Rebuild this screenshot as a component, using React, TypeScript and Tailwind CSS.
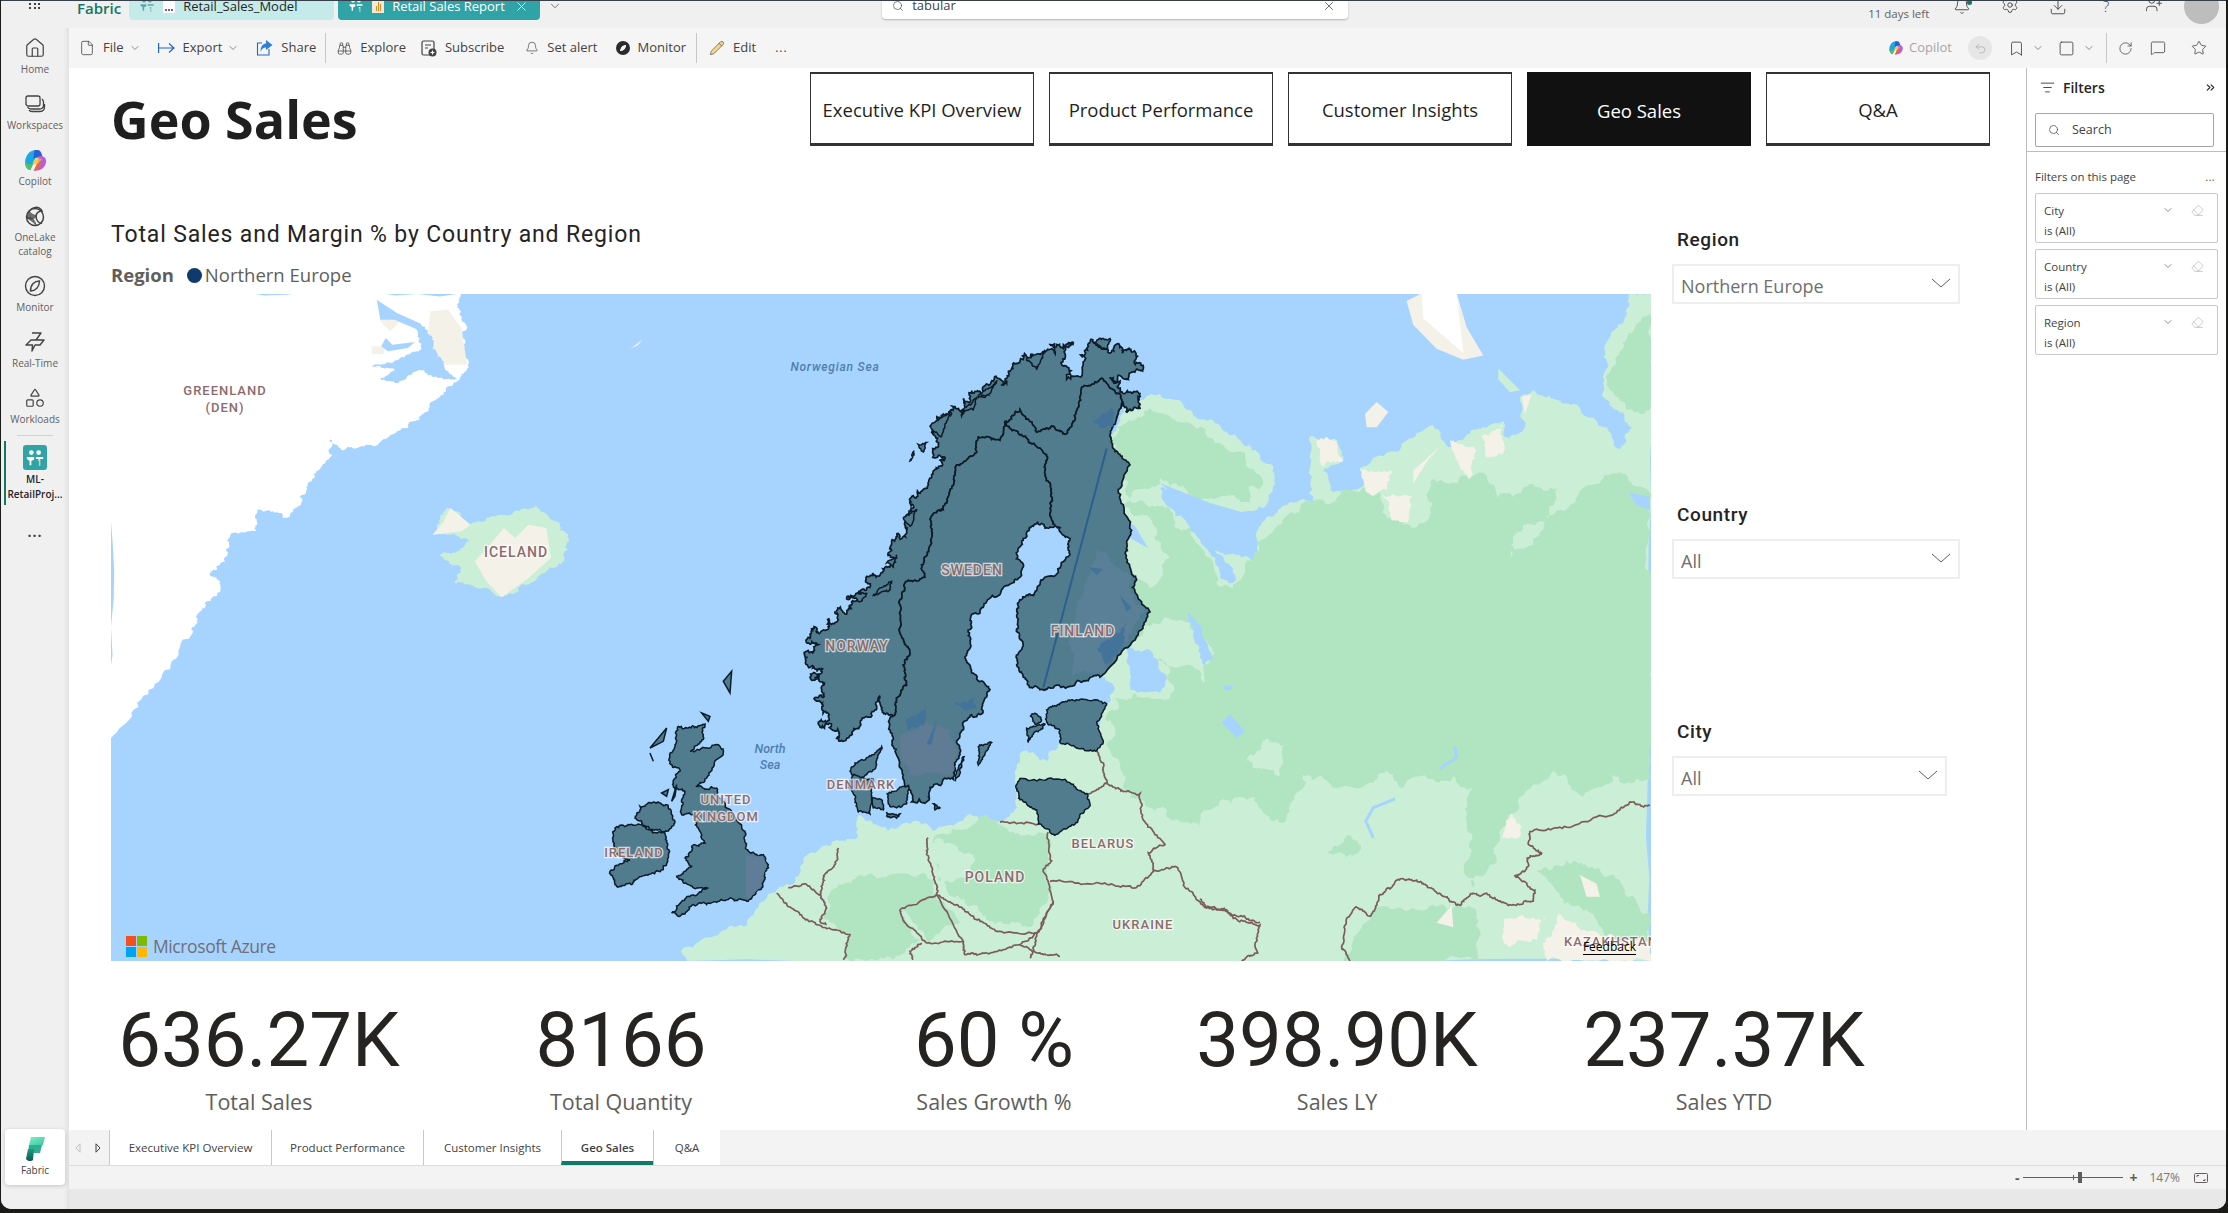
import {
  Bell, Binoculars, Bookmark, ChevronDown, ChevronsRight, Download, Eraser, File, House,
  ListFilter, MessageSquare, Pencil, RotateCw, Search, Settings, Shapes, Square, Star, Undo2, UserPlus, X,
} from "lucide-react";

const NS = "#507c8e";
const EDGE = "#0d1c28";
const LIGHT = "#cbeed6";
const FOREST = "#b1e5c1";
const SAND = "#f4f2e8";
const BORDER = "#7c5b5b";
const WATER = "#a7d4fe";

// roughens a polygon so coasts and forest edges don't look like straight cuts
function hash(x: number, y: number) {
  const s = Math.sin(x * 12.9898 + y * 78.233) * 43758.5453;
  return s - Math.floor(s);
}

function jag(points: string, amp: number, closed = true, depth = 4, rough = 0.3) {
  const pts = points.trim().split(" ").map((s) => s.split(",").map(Number));
  const split = (a: number[], b: number[], d: number): number[][] => {
    const len = Math.hypot(b[0] - a[0], b[1] - a[1]);
    if (d === 0 || len < 5) return [];
    const [p, q] = a[0] < b[0] || (a[0] === b[0] && a[1] < b[1]) ? [a, b] : [b, a];
    const mx = (a[0] + b[0]) / 2;
    const my = (a[1] + b[1]) / 2;
    const off = (hash(mx, my) - 0.5) * 2 * Math.min(amp, len * rough);
    const m = [mx - ((q[1] - p[1]) / len) * off, my + ((q[0] - p[0]) / len) * off];
    return [...split(a, m, d - 1), m, ...split(m, b, d - 1)];
  };
  const out: number[][] = [];
  pts.forEach((p, i) => {
    out.push(p);
    const next = pts[i + 1] ?? (closed ? pts[0] : null);
    if (next) out.push(...split(p, next, depth));
  });
  return out.map((p) => `${p[0].toFixed(1)},${p[1].toFixed(1)}`).join(" ");
}

const greenland = "25,316 25,1650 120,1500 205,1340 235,1260 270,1200 250,1150 280,1120 290,1050 350,1030 350,965 410,990 450,950 480,870 520,800 510,740 540,785 600,770 690,720 720,680 770,620 805,575 825,530 820,410 800,350 810,316";
const fjordA = "715,405 735,430 745,480 770,530 800,570 770,575 715,545 660,585 625,570 665,545 605,535 650,525 715,490 712,440";
const fjordB = "620,335 665,375 715,405 712,425 660,395 628,395";
const fjordC = "640,450 655,470 705,462 690,480 645,490 630,475";

const land = "687,963 683,950 700,943 747,927 767,900 790,887 807,857 837,842 857,840 860,817 888,833 918,823 933,833 973,818 1000,823 1017,810 1015,781 1023,753 1047,763 1060,744 1090,735 1107,706 1115,690 1100,679 1110,600 1110,450 1127,402 1160,396 1187,412 1227,434 1260,459 1270,466 1275,486 1257,512 1240,518 1200,510 1160,490 1165,505 1210,555 1220,580 1233,585 1233,570 1215,552 1257,565 1262,560 1257,533 1287,507 1313,503 1310,438 1337,442 1343,462 1323,473 1333,494 1360,490 1360,470 1413,440 1433,427 1448,449 1483,429 1503,423 1510,442 1525,429 1520,399 1533,392 1577,407 1603,429 1620,451 1632,429 1603,394 1605,347 1627,316 1630,295 1651,295 1651,963";
const forest = "1313,503 1360,494 1380,494 1387,520 1420,525 1433,481 1490,486 1513,499 1533,486 1557,490 1550,516 1513,542 1510,560 1533,547 1560,512 1583,490 1613,475 1651,499 1651,781 1613,777 1583,799 1553,773 1520,799 1500,838 1487,873 1473,890 1467,825 1473,790 1433,781 1403,790 1387,773 1367,786 1333,790 1303,777 1283,825 1240,799 1220,803 1200,829 1165,810 1130,800 1115,760 1105,720 1115,700 1135,695 1170,700 1170,670 1130,640 1120,600 1125,560 1125,505 1165,510 1210,560 1233,590 1245,570 1257,545";

const norwayCoast = "230,1030 175,990 205,975 165,930 190,900 150,880 190,860 148,820 175,800 150,775 195,765 230,745 225,720 265,715 300,680 260,685 320,665 345,630 395,605 385,575 430,535 445,480 465,440 490,420 520,375 555,345 515,280 570,230 605,240 650,180 700,155 740,160 800,95 860,80 940,60 920,150 985,70 1005,60 1045,80 1085,85 1150,125 1095,150 1050,145 1090,185 1140,185 1140,200 1090,210 1070,245";
const norwayBorder = "1070,245 1085,200 1030,150 965,170 945,250 915,285 875,265 830,280 780,225 735,255 720,300 655,290 650,330 590,360 580,410 550,470 515,485 515,550 485,605 495,635 435,650 420,690 425,780 450,820 430,850 440,900 410,935 400,975";
const norwaySouth = "400,975 365,960 360,925 345,960 300,1000 260,1030 230,1030";
const norway = `${jag(norwayCoast, 24, false, 5, 0.5)} ${jag(norwayBorder, 4, false)} ${jag(norwaySouth, 8, false)}`;
const sweden = `${jag("735,255 790,290 860,335 855,375 875,430 870,480 885,510", 4, false)} ${jag("885,510 850,505 820,510 790,540 770,590 790,610 755,650 680,695 630,740 630,790 615,830 640,870 690,910 665,970 610,990 590,1040 600,1070 580,1130 510,1150 500,1185 455,1185 430,1120 400,1050 390,980 400,975", 9, false)} ${jag("400,975 410,935 440,900 430,850 450,820 425,780 420,690 435,650 495,635 485,605 515,550 515,485 550,470 580,410 590,360 650,330 655,290 720,300 735,255", 4, false)}`;
const finland = `${jag("780,225 830,280 875,265 915,285 945,250 965,170 1030,150 1085,200 1070,245", 4, false)} ${jag("1070,245 1050,290 1060,320 1110,360 1075,420 1115,520 1100,550 1100,590 1130,640 1115,660 1170,720 1130,780 1020,880", 4, false)} ${jag("1020,880 960,890 860,910 820,905 790,880 770,850 785,790 770,730 780,690 820,680 850,640 930,580 930,540 885,510", 8, false)} ${jag("885,510 870,480 875,430 855,375 860,335 790,290 735,255 780,225", 4, false)}`;

const shaded = [
  "860,960 910,940 950,935 1040,945 1010,990 1030,1040 1010,1060 980,1060 900,1040 900,1010 860,990",
  "768,1145 780,1128 915,1130 980,1165 990,1190 945,1240 880,1265 835,1240 830,1205 780,1180",
  "285,1090 340,1070 365,1050 345,1105 300,1130 270,1110",
  "265,1150 280,1120 340,1130 335,1170 330,1215 295,1210 285,1170",
  "335,1175 365,1180 370,1205 340,1200",
  "380,1165 445,1145 440,1190 410,1200 385,1190",
  "380,1210 420,1215 410,1225 380,1220",
  "810,975 830,970 845,985 825,995",
  "800,1005 855,995 820,1020 805,1040",
  "655,1050 695,1040 670,1075 655,1095",
  "612,1075 600,1110 585,1135 590,1110",
  "520,1190 540,1200 525,1205",
  "450,350 462,325 455,345",
  "475,310 500,305 490,328",
  "510,265 575,225 545,290",
  "605,230 650,195 640,225",
  "655,195 710,155 690,185",
  "800,100 850,85 830,125",
  "870,65 885,62 880,72",
  "1000,60 1050,50 1040,75",
  "340,680 395,645 385,670",
  "275,680 320,675 300,695",
  "430,490 470,470 450,510",
  "380,600 410,580 400,610",
];

const britain = "355,205 385,210 435,198 430,230 390,280 480,265 490,285 440,360 410,385 470,390 500,450 555,520 565,580 610,590 625,620 605,690 565,730 500,725 440,740 400,740 355,775 335,765 385,715 445,690 385,680 350,655 395,625 375,600 395,565 435,555 415,510 395,470 365,470 375,400 340,385 360,340 330,310 350,250";
const ireland = "165,510 245,500 270,515 315,525 325,600 310,635 235,660 215,680 165,680 150,640 210,605 170,590 160,530";
const ulster = "225,480 240,445 275,435 320,440 345,490 320,520 270,515 245,490";
const ukIslands = [
  "270,270 320,210 310,250",
  "305,405 325,395 320,415",
  "425,165 450,175 445,190",
  "490,70 515,40 510,105",
  "270,285 280,310 272,290",
  "335,430 350,380 345,415",
];

const borders7 = [
  "1010,1060 1030,1100 1040,1140 980,1165",
  "1040,1140 1090,1160 1140,1165 1150,1230 1215,1290 1165,1310 1180,1355 1250,1345 1275,1395 1330,1440 1430,1465 1500,1480",
  "1180,1355 1130,1395 1020,1385 870,1380",
  "865,1260 875,1330 850,1350 880,1430 830,1510 810,1568",
  "720,1235 835,1240",
];
const borders8 = [
  "650,705 680,740 720,770 770,800 870,830 850,905",
  "685,690 740,680 780,710 800,750 780,790 800,800",
  "835,570 825,620 790,660 780,710",
  "1105,540 1100,590 1130,680 1130,710",
  "1020,755 1040,800 1100,855 1210,850 1130,710 1020,755",
  "1130,710 1190,740 1230,770 1280,800 1310,820 1430,825 1480,730",
  "1085,855 1050,880 1060,905",
  "1210,850 1215,890 1280,885 1380,860 1430,825",
  "1380,860 1440,885 1500,895",
];
const borders10 = [
  "0,1405 20,1425 80,1430 100,1450 180,1465 165,1510 175,1530 125,1548",
  "1350,1190 1290,1182 1245,1208 1100,1240 990,1250 985,1275 1025,1300 980,1310 985,1330 945,1352 1005,1385 1000,1410 925,1420 860,1392 810,1395 780,1420 735,1400 695,1380 650,1362 590,1362 540,1395 510,1445 465,1425 440,1450 425,1515 450,1548",
];

function MapLabel({ x, y, children, size = 14 }: { x: number; y: number; children: string; size?: number }) {
  return (
    <text
      x={x}
      y={y}
      textAnchor="middle"
      fontSize={size}
      letterSpacing="1"
      fill="#8d6b6b"
      stroke="#ffffff"
      strokeOpacity="0.7"
      strokeWidth="2.5"
      className="font-['Roboto'] font-medium [paint-order:stroke]"
    >
      {children}
    </text>
  );
}

function GeoMap() {
  return (
    <div className="relative h-[667px] w-[1540px] overflow-hidden bg-[#a7d4fe]">
      <svg viewBox="111 296 1540 667" className="block h-full w-full">
        <rect x="111" y="296" width="1540" height="667" fill={WATER} />

        <g transform="translate(100 190) scale(0.4464 0.3333)">
          <polygon points={jag(greenland, 9)} fill="#ffffff" />
          <polygon points="740,370 780,365 810,420 822,530 770,530 745,480 735,430" fill={SAND} />
          <polygon points="630,365 680,390 650,430 628,400" fill={SAND} />
          <polygon points="608,475 640,475 635,498 608,498" fill={SAND} />
          <polygon points={jag(fjordA, 5)} fill={WATER} />
          <polygon points={fjordB} fill={WATER} />
          <polygon points={fjordC} fill={WATER} />
          <polygon points="1188,482 1215,455 1205,472" fill={SAND} />
          <polygon points={jag("745,1040 780,960 830,1010 860,1000 900,980 975,950 1020,1000 1050,1050 1040,1110 980,1170 930,1215 900,1228 860,1200 830,1190 795,1185 810,1140 760,1105 800,1090 830,1060 800,1045", 6)} fill={LIGHT} />
          <polygon points="745,1040 770,1000 785,960 830,1010 810,1030" fill={SAND} />
          <polygon points="840,1120 880,1060 905,1020 930,1050 960,1010 1000,1020 1010,1110 960,1170 900,1228 865,1180" fill={SAND} />
        </g>

        <polygon points={jag(land, 3)} fill={LIGHT} />
        <polygon points={jag(forest, 8, true, 5)} fill={FOREST} />
        <polygon points={jag("1140,625 1190,625 1212,650 1205,685 1160,660 1132,650", 6)} fill={LIGHT} />
        <polygon points={jag("1120,510 1150,520 1170,560 1150,590 1125,570", 6)} fill={LIGHT} />
        <polygon points={jag("1112,440 1150,410 1190,425 1245,455 1262,480 1250,505 1205,500 1160,480 1130,500", 6)} fill={FOREST} />
        <polygon points={jag("1127,650 1150,652 1167,680 1160,695 1130,692", 2)} fill={WATER} />
        <polygon points={jag("1187,614 1197,625 1213,660 1205,667 1195,645", 2)} fill={WATER} />
        <polygon points="1122,520 1135,528 1148,550 1130,540" fill={WATER} />
        <polygon points="1160,485 1210,505 1245,515 1235,522 1195,515" fill={WATER} />

        <g transform="translate(1200 290) scale(0.3333 0.4348)">
          <polygon points="620,30 665,12 770,12 800,90 850,155 790,165 710,140 640,85" fill={SAND} />
          <polygon points="665,12 770,12 790,150 730,110 670,70" fill="#ffffff" />
          <polygon points="495,290 530,262 565,285 530,320 500,320" fill={SAND} />
          <polygon points="895,185 960,235 930,240 895,210" fill={LIGHT} />
          <polygon points={jag("340,345 400,350 430,395 370,410", 6)} fill={SAND} />
          <polygon points={jag("480,415 575,420 560,465 500,470", 6)} fill={SAND} />
          <polygon points="640,420 720,365 680,400 640,450" fill={SAND} />
          <polygon points={jag("750,350 830,375 810,440 780,410", 6)} fill={SAND} />
          <polygon points={jag("845,340 910,310 910,380 860,390", 6)} fill={SAND} />
          <polygon points="965,250 995,245 975,290" fill={SAND} />
          <polygon points={jag("550,475 640,480 625,535 580,535", 6)} fill={SAND} />
          <polygon points={jag("1240,180 1300,100 1350,60 1350,280 1280,280 1220,210", 8)} fill={FOREST} />
          <polygon points="1285,470 1350,480 1350,510 1310,500" fill={WATER} />
          <polygon points="70,915 100,915 90,925 75,925" fill={WATER} />
          <polygon points="65,1000 90,980 135,1020 110,1035" fill={WATER} />
          <polygon points={jag("135,1090 190,1040 250,1050 240,1120 170,1105", 8)} fill={LIGHT} />
          <polygon points={jag("145,460 190,455 200,500 165,500", 6)} fill={LIGHT} />
          <polygon points={jag("375,1300 440,1260 485,1290 440,1310", 6)} fill={FOREST} />
          <path d="M720 1105 L770 1080 L765 1055 M495 1230 L520 1195 L585 1175 M500 1230 L520 1265" fill="none" stroke={WATER} strokeWidth="3" vectorEffect="non-scaling-stroke" />
          <polygon points={jag("430,1548 520,1430 690,1420 830,1440 830,1548", 10)} fill={FOREST} />
          <polygon points={jag("1010,1340 1130,1320 1230,1350 1350,1440 1350,1548 1210,1480 1080,1400", 10)} fill={FOREST} />
          <polygon points={jag("910,1450 1040,1450 1010,1500 920,1510", 8)} fill={SAND} />
          <polygon points={jag("1030,1520 1080,1440 1200,1490 1350,1500 1350,1548 1040,1548", 8)} fill={SAND} />
          <polygon points={jag("905,1265 935,1210 965,1240 955,1265", 5)} fill={SAND} />
          <polygon points="710,1460 755,1420 760,1470" fill={SAND} />
          <polygon points="1140,1350 1190,1370 1200,1400 1160,1400" fill={SAND} />
          {borders10.map((p) => (
            <polyline key={p} points={jag(p, 3, false)} fill="none" stroke={BORDER} strokeWidth="1.7" vectorEffect="non-scaling-stroke" />
          ))}
        </g>

        <g transform="translate(560 660) scale(0.3333)">
          <polygon points={jag("830,690 920,650 1100,650 1130,720 1020,750 1080,850 1000,905 850,905 870,830 790,780", 12)} fill={FOREST} />
          <polygon points={jag("1120,540 1270,470 1340,510 1460,530 1470,680 1420,800 1290,790 1220,740 1160,700 1130,620", 12)} fill={FOREST} />
          <polygon points={jag("1020,755 1130,720 1200,790 1100,850", 8)} fill={FOREST} />
          <polygon points={jag("1130,540 1240,590 1210,660 1140,680", 10)} fill={LIGHT} />
          {borders8.map((p) => (
            <polyline key={p} points={jag(p, 3, false)} fill="none" stroke={BORDER} strokeWidth="1.7" vectorEffect="non-scaling-stroke" />
          ))}
          <polygon points={jag(britain, 6)} fill={NS} stroke={EDGE} strokeWidth="1.5" vectorEffect="non-scaling-stroke" />
          <polygon points="558,595 608,595 620,620 600,688 565,725 558,715" fill="#5f7d98" />
          <polygon points={jag(ireland, 6)} fill={NS} stroke={EDGE} strokeWidth="1.5" vectorEffect="non-scaling-stroke" />
          <polygon points={jag(ulster, 5)} fill={NS} stroke={EDGE} strokeWidth="1.5" vectorEffect="non-scaling-stroke" />
          {ukIslands.map((p) => (
            <polygon key={p} points={p} fill={NS} stroke={EDGE} strokeWidth="1.5" vectorEffect="non-scaling-stroke" />
          ))}
        </g>

        <g transform="translate(760 320) scale(0.3333 0.4082)">
          {borders7.map((p) => (
            <polyline key={p} points={jag(p, 3, false)} fill="none" stroke={BORDER} strokeWidth="1.7" vectorEffect="non-scaling-stroke" />
          ))}
          <polygon points={norway} fill={NS} stroke={EDGE} strokeWidth="1.7" vectorEffect="non-scaling-stroke" />
          <polygon points={sweden} fill={NS} stroke={EDGE} strokeWidth="1.7" vectorEffect="non-scaling-stroke" />
          <polygon points={jag("415,1030 500,985 530,1000 570,1010 590,1060 570,1120 510,1110 450,1120 425,1080", 6)} fill="#607c95" />
          <polygon points={jag("440,985 500,950 490,1000 445,1010", 4)} fill="#44739a" />
          <polygon points={jag("580,945 640,930 650,960 610,960", 4)} fill="#44739a" />
          <polygon points="500,1045 530,985 515,1045" fill="#44739a" />
          <polygon points={finland} fill={NS} stroke={EDGE} strokeWidth="1.7" vectorEffect="non-scaling-stroke" />
          <polygon points={jag("925,800 1010,565 1105,625 1155,720 1020,870 935,875", 10)} fill="#5a8097" />
          <polygon points={jag("1000,255 1055,220 1060,265 1020,270", 4)} fill="#44739a" />
          <polygon points="985,610 1030,615 1010,630" fill="#44739a" />
          <polygon points={jag("1010,810 1100,745 1090,800 1040,850", 5)} fill="#44739a" />
          <polygon points="1080,680 1115,710 1100,720" fill="#44739a" />
          {shaded.map((p) => (
            <polygon key={p} points={jag(p, 3)} fill={NS} stroke={EDGE} strokeWidth="1.5" vectorEffect="non-scaling-stroke" />
          ))}
          <line x1="1040" y1="320" x2="850" y2="905" stroke="#2d5f8d" strokeWidth="2" vectorEffect="non-scaling-stroke" />
        </g>

        <g transform="translate(0 2)">
          <MapLabel x={225} y={395} size={13}>GREENLAND</MapLabel>
          <MapLabel x={225} y={412} size={13}>(DEN)</MapLabel>
          <MapLabel x={516} y={557}>ICELAND</MapLabel>
          <MapLabel x={972} y={575}>SWEDEN</MapLabel>
          <MapLabel x={857} y={651}>NORWAY</MapLabel>
          <MapLabel x={1083} y={636}>FINLAND</MapLabel>
          <MapLabel x={861} y={789} size={13}>DENMARK</MapLabel>
          <MapLabel x={726} y={804} size={13}>UNITED</MapLabel>
          <MapLabel x={726} y={821} size={13}>KINGDOM</MapLabel>
          <MapLabel x={634} y={857} size={13}>IRELAND</MapLabel>
          <MapLabel x={995} y={882}>POLAND</MapLabel>
          <MapLabel x={1103} y={848} size={13}>BELARUS</MapLabel>
          <MapLabel x={1143} y={929} size={13}>UKRAINE</MapLabel>
          <MapLabel x={1611} y={946} size={13}>KAZAKHSTAN</MapLabel>
          <text x={835} y={371} textAnchor="middle" fontSize="12" letterSpacing="0.8" fill="#4f7fae" className="font-['Roboto'] font-medium italic">Norwegian Sea</text>
          <text x={770} y={753} textAnchor="middle" fontSize="12.5" fill="#4f7fae" className="font-['Roboto'] font-medium italic">North</text>
          <text x={770} y={769} textAnchor="middle" fontSize="12.5" fill="#4f7fae" className="font-['Roboto'] font-medium italic">Sea</text>
        </g>
      </svg>

      <div className="absolute bottom-[4px] left-[15px] flex items-center gap-[6px]">
        <div className="grid h-[21px] w-[21px] grid-cols-2 gap-px">
          <span className="bg-[#f25022]" />
          <span className="bg-[#7fba00]" />
          <span className="bg-[#00a4ef]" />
          <span className="bg-[#ffb900]" />
        </div>
        <span className="text-[17.500px] leading-none tracking-[-0.4px] text-[#6f6f78]">Microsoft Azure</span>
      </div>
      <span className="absolute bottom-[6px] right-[15px] border-b border-black text-[12px] leading-[14px] text-black">Feedback</span>
    </div>
  );
}

function CopilotIcon({ size = 24 }: { size?: number }) {
  return (
    <svg width={size} height={size} viewBox="0 0 24 24">
      <path d="M8 3c2-1 5-1 6 0l-3 9-4 9c-3 0-5-3-5-7 0-5 3-10 6-11z" fill="#1ea7e1" />
      <path d="M11 2h3c2 0 3 1 4 4l1 4-5-1-4 1z" fill="#2b5fd6" />
      <path d="M15 8c3-1 6 0 7 3 1 4-2 9-6 10l-5 1 3-8z" fill="#b55ee0" />
      <path d="M10 22l4-8 4-1-3 7z" fill="#f0663c" />
      <path d="M2 13c2 3 5 3 8 2l-3 6c-3 0-5-4-5-8z" fill="#4cc26a" />
      <path d="M10 12l4-3 4 2-4 4-5 1z" fill="#f2c230" opacity="0.8" />
    </svg>
  );
}

function WorkspaceBadge({ className = "" }: { className?: string }) {
  return (
    <svg viewBox="0 0 22 22" className={className} fill="currentColor">
      <circle cx="7" cy="5" r="2.6" />
      <circle cx="15" cy="5" r="2.6" />
      <path d="M2 10h8v3l-3 1v5H5v-5l-3-2zM12 10h8v2h-8z" />
      <text x="13" y="20" fontSize="10" className="font-['Open_Sans']">1</text>
    </svg>
  );
}

function RailItem({ label, icon, tall }: { label: string; icon: React.ReactNode; tall?: boolean }) {
  return (
    <div className={`flex w-full flex-col items-center ${tall ? "h-[70px]" : "h-[56px]"}`}>
      <div className="flex h-6 items-center justify-center text-[#424242]">{icon}</div>
      <span className="mt-[2px] whitespace-pre-line text-center text-[10px] leading-[14px] text-[#616161]">{label}</span>
    </div>
  );
}

function LeftRail() {
  return (
    <aside className="flex w-[68px] shrink-0 flex-col items-center bg-[#f0f0f0] pt-2 shadow-[inset_-6px_0_6px_-6px_rgba(0,0,0,0.12)]">
      <RailItem label="Home" icon={<House size={22} strokeWidth={1.3} />} />
      <RailItem
        label="Workspaces"
        icon={
          <svg width="22" height="22" viewBox="0 0 22 22" fill="none" stroke="currentColor" strokeWidth="1.3">
            <rect x="2" y="3" width="14" height="10" rx="2" />
            <path d="M18 6c1 1 1.500 2 1.500 3v3c0 3-2 4-4 4H7c-1.500 0-2.500-.5-3.500-2M20.500 11v3c0 3-2 4.500-4.500 4.500H8c-1.500 0-2.500-.5-3-1.500" />
          </svg>
        }
      />
      <RailItem label="Copilot" icon={<CopilotIcon size={25} />} />
      <RailItem
        tall
        label={"OneLake\ncatalog"}
        icon={
          <svg width="22" height="22" viewBox="0 0 22 22" fill="none" stroke="currentColor" strokeWidth="1.5">
            <circle cx="11" cy="12" r="8.500" />
            <path d="M5 7c3-6 10-6 13-1-3 0-6 2-6 5 0 4 3 8 6 7" />
            <path d="M3 13c4-1 7 1 9 7" fill="currentColor" opacity="0.75" />
            <path d="M5 7c2 2 4 3 7 4-2 3-6 3-9 2z" fill="currentColor" opacity="0.75" />
          </svg>
        }
      />
      <RailItem
        label="Monitor"
        icon={
          <svg width="22" height="22" viewBox="0 0 22 22" fill="none" stroke="currentColor" strokeWidth="1.4">
            <circle cx="11" cy="11" r="9.500" />
            <path d="M15.500 6c-5 0-9 3.500-9 10 5 0 9-4 9-10z" />
          </svg>
        }
      />
      <RailItem
        label="Real-Time"
        icon={
          <svg width="22" height="22" viewBox="0 0 22 22" fill="none" stroke="currentColor" strokeWidth="1.4" strokeLinejoin="round">
            <path d="M8 2h9l-5 7h8l-4 5h-5l-3 6 .5-6H2l5-5h6" />
          </svg>
        }
      />
      <div className="h-[49px] w-full overflow-visible">
        <RailItem label="Workloads" icon={<Shapes size={22} strokeWidth={1.3} />} />
      </div>
      <div className="h-px w-9 bg-[#d1d1d1]" />
      <div className="relative mt-[5px] flex h-[64px] w-full flex-col items-center">
        <span className="absolute left-[3px] top-0 h-full w-[2px] bg-[#117865]" />
        <div className="mt-1 flex h-[25px] w-[24px] items-center justify-center rounded-[3px] bg-[#2fa3a5] text-white">
          <WorkspaceBadge className="h-5 w-5" />
        </div>
        <span className="mt-[2px] text-center text-[10px] font-semibold leading-[15px] text-[#242424]">
          ML-
          <br />
          RetailProj...
        </span>
      </div>
      <span className="mt-[15px] text-[14px] font-bold leading-[24px] tracking-[1px] text-[#424242]">...</span>
      <div className="mb-[24px] mt-auto flex h-[56px] w-[60px] flex-col items-center rounded-[4px] bg-white pt-[7px] shadow-[0_1px_4px_rgba(0,0,0,0.18)]">
        <svg width="24" height="26" viewBox="0 0 24 26">
          <defs>
            <linearGradient id="fabA" x1="0" y1="0" x2="1" y2="1">
              <stop offset="0" stopColor="#7df0c4" />
              <stop offset="1" stopColor="#3fc4a2" />
            </linearGradient>
            <linearGradient id="fabB" x1="0" y1="0" x2="0" y2="1">
              <stop offset="0" stopColor="#1f9c84" />
              <stop offset="1" stopColor="#0b5a4e" />
            </linearGradient>
          </defs>
          <path d="M8 1h14l-2 8H6z" fill="url(#fabA)" />
          <path d="M6 9h13l-2 8H5z" fill="#2fae90" />
          <path d="M5 13h6l-1 11c-2 2-6 1-7-1z" fill="url(#fabB)" />
        </svg>
        <span className="mt-[1px] text-[10px] leading-[14px] text-[#424242]">Fabric</span>
      </div>
    </aside>
  );
}

function TopBar() {
  return (
    <header className="flex h-[28px] shrink-0 items-start overflow-hidden border-t border-[#37404a] bg-[#f0f0f0]">
      <div className="mt-[2px] ml-[28px] grid w-[12px] grid-cols-3 gap-[2px]">
        {Array.from({ length: 6 }).map((_, i) => (
          <span key={i} className="h-[2px] w-[2px] bg-[#424242]" />
        ))}
      </div>
      <span className="-mt-[3px] ml-[36px] text-[15px] font-semibold leading-5 text-[#117865]">Fabric</span>
      <div className="ml-[8px] flex h-[19px] w-[205px] items-center gap-2 rounded-b-[4px] bg-[#c4ebe9] pl-[10px] text-[#242424]">
        <WorkspaceBadge className="-mt-3 h-4 w-4 text-[#5ba9a9]" />
        <span className="-mt-3 flex h-4 w-3 flex-wrap content-end gap-px bg-white p-[2px]">
          <i className="h-[2px] w-[2px] bg-[#6b5bc4]" />
          <i className="h-[2px] w-[2px] bg-[#6b5bc4]" />
          <i className="h-[2px] w-[2px] bg-[#6b5bc4]" />
        </span>
        <span className="-mt-[10px] text-[13px] leading-4">Retail_Sales_Model</span>
      </div>
      <div className="ml-[4px] flex h-[19px] w-[202px] items-center gap-2 rounded-b-[4px] bg-[#2fa3a5] pl-[10px] text-white">
        <WorkspaceBadge className="-mt-3 h-4 w-4" />
        <span className="-mt-3 flex h-4 w-3 items-end justify-center gap-px bg-[#f6e9d6] pb-[2px]">
          <i className="h-[5px] w-px bg-[#d98a2b]" />
          <i className="h-[9px] w-px bg-[#d98a2b]" />
          <i className="h-[7px] w-px bg-[#d98a2b]" />
        </span>
        <span className="-mt-[10px] text-[13px] leading-4">Retail Sales Report</span>
        <X size={15} strokeWidth={1.3} className="-mt-2 ml-[1px]" />
      </div>
      <ChevronDown size={14} strokeWidth={1.2} className="ml-[8px] -mt-[2px] text-[#424242]" />
      <div className="ml-[320px] flex h-[18px] w-[466px] items-center rounded-b-[4px] bg-white pl-[10px] pr-[12px] shadow-[0_1px_2px_rgba(0,0,0,0.25)]">
        <Search size={12} strokeWidth={1.3} className="-mt-2 text-[#424242]" />
        <span className="-mt-[10px] ml-[8px] text-[13px] leading-4 text-[#424242]">tabular</span>
        <X size={14} strokeWidth={1.3} className="-mt-2 ml-auto text-[#424242]" />
      </div>
      <span className="ml-[520px] mt-[5px] text-[11.500px] leading-4 text-[#616161]">11 days left</span>
      <div className="ml-[24px] flex items-start gap-[30px] text-[#424242]">
        <span className="relative -mt-[4px]">
          <Bell size={18} strokeWidth={1.2} />
          <span className="absolute -right-[1px] top-[3px] h-[5px] w-[5px] rounded-full bg-[#117865]" />
        </span>
        <Settings size={18} strokeWidth={1.2} className="-mt-[5px]" />
        <Download size={18} strokeWidth={1.2} className="-mt-[3px]" />
        <span className="-mt-[4px] w-[18px] text-center text-[15px] font-light leading-[18px]">?</span>
        <UserPlus size={18} strokeWidth={1.2} className="-mt-[6px]" />
      </div>
      <span className="-mt-[12px] ml-[21px] h-[35px] w-[35px] rounded-full bg-[#bdbdbd]" />
    </header>
  );
}

function CmdButton({ icon, label, className = "" }: { icon: React.ReactNode; label: string; className?: string }) {
  return (
    <div className={`flex items-center gap-[8px] ${className}`}>
      {icon}
      <span>{label}</span>
    </div>
  );
}

function CommandBar() {
  return (
    <div className="flex h-[40px] shrink-0 items-center bg-[#f5f5f5] pl-[10px] pr-[19px] text-[13px] text-[#424242]">
      <CmdButton icon={<File size={16} strokeWidth={1.2} />} label="File" />
      <ChevronDown size={12} strokeWidth={1.2} className="ml-[5px]" />
      <CmdButton
        className="ml-[17px]"
        icon={
          <svg width="17" height="12" viewBox="0 0 17 12" fill="none" stroke="#2469c0" strokeWidth="1.2">
            <path d="M.6 1v10M.6 6H16M11 1.500 16 6l-5 4.500" />
          </svg>
        }
        label="Export"
      />
      <ChevronDown size={12} strokeWidth={1.2} className="ml-[5px]" />
      <CmdButton
        className="ml-[17px]"
        icon={
          <svg width="17" height="16" viewBox="0 0 17 16">
            <path d="M6 3H1.500v12H13V9" fill="none" stroke="#2469c0" strokeWidth="1.1" />
            <path d="M10 0l6.500 5-6.500 5V7.500C7 7.500 5.500 9 4.500 12c0-5 2-8 5.500-8.500z" fill="#2f7fd6" />
          </svg>
        }
        label="Share"
      />
      <span className="ml-[9px] h-[30px] w-px bg-[#c8c8c8]" />
      <CmdButton className="ml-[11px]" icon={<Binoculars size={15} strokeWidth={1.2} />} label="Explore" />
      <CmdButton
        className="ml-[15px]"
        icon={
          <svg width="16" height="17" viewBox="0 0 16 17" fill="none" stroke="currentColor" strokeWidth="1.2">
            <rect x="1" y="1" width="12" height="14" rx="1.500" />
            <path d="M4 5h6M4 8h3" />
            <circle cx="11.500" cy="12.500" r="4" fill="#424242" stroke="none" />
            <path d="M11.500 10.500v4M9.500 12.500h4" stroke="#fff" />
          </svg>
        }
        label="Subscribe"
      />
      <CmdButton className="ml-[21px]" icon={<Bell size={14} strokeWidth={1.2} />} label="Set alert" />
      <CmdButton
        className="ml-[18px]"
        icon={
          <svg width="14" height="14" viewBox="0 0 14 14">
            <circle cx="7" cy="7" r="7" fill="#2b2b2b" />
            <path d="M10 4C7 4 4.500 6 4 10c3 0 6-2 6-6z" fill="#fff" />
          </svg>
        }
        label="Monitor"
      />
      <span className="ml-[10px] h-[30px] w-px bg-[#c8c8c8]" />
      <CmdButton
        className="ml-[12px]"
        icon={<Pencil size={16} strokeWidth={1.1} fill="#f4d58a" className="text-[#5c5c5c]" />}
        label="Edit"
      />
      <span className="ml-[19px] text-[12px] tracking-[1px]">...</span>

      <div className="ml-auto flex items-center">
        <CopilotIcon size={16} />
        <span className="ml-[5px] text-[#a6a6a6]">Copilot</span>
        <span className="ml-[16px] flex h-6 w-6 items-center justify-center rounded-full bg-[#e6e6e6]">
          <Undo2 size={13} strokeWidth={1.2} className="text-[#a6a6a6]" />
        </span>
        <Bookmark size={17} strokeWidth={1.2} className="ml-[16px]" />
        <ChevronDown size={12} strokeWidth={1.2} className="ml-[7px]" />
        <Square size={17} strokeWidth={1.2} className="ml-[14px]" />
        <ChevronDown size={12} strokeWidth={1.2} className="ml-[8px]" />
        <span className="ml-[11px] h-[30px] w-px bg-[#c8c8c8]" />
        <RotateCw size={15} strokeWidth={1.2} className="ml-[11px]" />
        <MessageSquare size={16} strokeWidth={1.2} className="ml-[17px]" />
        <Star size={16} strokeWidth={1.2} className="ml-[25px]" />
      </div>
    </div>
  );
}

function NavButton({ label, active }: { label: string; active?: boolean }) {
  return (
    <div
      className={`flex h-[74px] w-[224px] items-center justify-center pt-[3px] text-[18.500px] ${
        active
          ? "bg-[#111111] text-white"
          : "border border-t-2 border-b-[3px] border-[#333333] bg-white text-[#1f1f1f]"
      }`}
    >
      {label}
    </div>
  );
}

function Slicer({ label, value, width, className }: { label: string; value: string; width: string; className: string }) {
  return (
    <div className={className}>
      <div className="pl-[5px] font-['Roboto'] text-[19px] font-medium leading-6 tracking-[0.6px] text-[#252423]">{label}</div>
      <div className={`mt-[12px] flex h-[40px] items-center justify-between border-2 border-[#eeeeee] pl-[7px] pr-[7px] ${width}`}>
        <span className="mt-[5px] text-[18px] text-[#6f6f6f]">{value}</span>
        <svg width="20" height="10" viewBox="0 0 20 10" fill="none" stroke="#605e5c" strokeWidth="1" className="-mt-[2px]">
          <path d="M1 1l9 8 9-8" />
        </svg>
      </div>
    </div>
  );
}

function Kpi({ value, label, width }: { value: string; label: string; width: string }) {
  return (
    <div className={`flex flex-col items-center ${width}`}>
      <span className="font-['Roboto'] text-[76px] leading-[80px] text-[#252423]">{value}</span>
      <span className="mt-[6px] text-[21.500px] leading-8 text-[#605e5c]">{label}</span>
    </div>
  );
}

function ReportPage() {
  return (
    <main className="flex min-w-0 flex-1 flex-col bg-white pl-[42px]">
      <div className="mt-1 flex h-[74px] items-start justify-between pr-[36px]">
        <h1 className="pt-[20px] text-[52px] font-bold leading-[54px] text-[#1f1f1f]">Geo Sales</h1>
        <div className="flex gap-[15px]">
          <NavButton label="Executive KPI Overview" />
          <NavButton label="Product Performance" />
          <NavButton label="Customer Insights" />
          <NavButton label="Geo Sales" active />
          <NavButton label="Q&A" />
        </div>
      </div>

      <div className="mt-[74px] flex">
        <div className="w-[1540px]">
          <h2 className="font-['Roboto'] text-[23px] leading-[30px] tracking-[0.85px] text-[#252423]">
            Total Sales and Margin % by Country and Region
          </h2>
          <div className="mt-[11px] mb-[2px] flex h-[28px] items-center text-[18.500px] text-[#605e5c]">
            <span className="font-bold">Region</span>
            <span className="ml-[13px] h-[15px] w-[15px] rounded-full bg-[#0e3a6e]" />
            <span className="ml-[3px]">Northern Europe</span>
          </div>
          <div className="mt-[5px]">
            <GeoMap />
          </div>
        </div>
        <div className="ml-[21px] pt-[8px]">
          <Slicer label="Region" value="Northern Europe" width="w-[288px]" className="" />
          <Slicer label="Country" value="All" width="w-[288px]" className="mt-[199px]" />
          <Slicer label="City" value="All" width="w-[275px]" className="mt-[141px]" />
        </div>
      </div>

      <div className="-ml-px mt-[39px] flex">
        <Kpi value="636.27K" label="Total Sales" width="w-[298px]" />
        <Kpi value="8166" label="Total Quantity" width="w-[426px]" />
        <Kpi value="60 %" label="Sales Growth %" width="w-[320px]" />
        <Kpi value="398.90K" label="Sales LY" width="w-[366px]" />
        <Kpi value="237.37K" label="Sales YTD" width="w-[408px]" />
      </div>
    </main>
  );
}

function FilterCard({ label }: { label: string }) {
  return (
    <div className="relative h-[50px] rounded-[2px] border border-[#c8c8c8] pl-[8px] pt-[7px] text-[11.500px] leading-[20px] text-[#424242]">
      <div>{label}</div>
      <div>is (All)</div>
      <ChevronDown size={12} strokeWidth={1.2} className="absolute right-[43px] top-[10px]" />
      <Eraser size={13} strokeWidth={1} className="absolute right-[13px] top-[10px] text-[#a0a0a0]" />
    </div>
  );
}

function FiltersPane() {
  return (
    <aside className="flex w-[200px] shrink-0 flex-col border-l border-[#bdbdbd] bg-white">
      <div className="flex h-[45px] items-center pb-[6px] pl-[13px] pr-[9px]">
        <ListFilter size={15} strokeWidth={1.3} className="text-[#252423]" />
        <span className="ml-[8px] text-[14px] font-semibold text-[#252423]">Filters</span>
        <ChevronsRight size={13} strokeWidth={2} className="ml-auto text-[#252423]" />
      </div>
      <div className="ml-2 mr-3 flex h-[34px] items-center rounded-[2px] border border-[#a6a6a6] pl-[12px] text-[12.500px] text-[#424242]">
        <Search size={12} strokeWidth={1.4} />
        <span className="ml-[12px]">Search</span>
      </div>
      <div className="mt-1 h-px bg-[#bdbdbd]" />
      <div className="mt-[17px] flex items-center justify-between pl-2 pr-[11px] text-[11.500px] leading-4 text-[#424242]">
        <span>Filters on this page</span>
        <span className="text-[10px] tracking-[0.5px]">...</span>
      </div>
      <div className="mx-2 mt-2 flex w-[183px] flex-col gap-[6px]">
        <FilterCard label="City" />
        <FilterCard label="Country" />
        <FilterCard label="Region" />
      </div>
    </aside>
  );
}

function PageTab({ label, width, active }: { label: string; width: string; active?: boolean }) {
  return (
    <div
      className={`flex h-full items-center justify-center border-l border-[#c8c8c8] bg-white text-[11.500px] text-[#424242] ${width} ${
        active ? "border-b-4 border-b-[#117865] pt-1 font-semibold text-[#242424]" : ""
      }`}
    >
      {label}
    </div>
  );
}

function BottomBars() {
  return (
    <div className="shrink-0">
      <div className="flex h-[36px] border-b border-[#dcdcdc] bg-[#f3f3f3]">
        <div className="flex w-[40px] items-center justify-between pl-[6px] pr-[8px]">
          <svg width="6" height="10" viewBox="0 0 6 10" fill="none" stroke="#c0c0c0">
            <path d="M5 .8 1 5l4 4.200z" />
          </svg>
          <svg width="6" height="10" viewBox="0 0 6 10" fill="none" stroke="#424242">
            <path d="M1 .8 5 5 1 9.200z" />
          </svg>
        </div>
        <PageTab label="Executive KPI Overview" width="w-[162px]" />
        <PageTab label="Product Performance" width="w-[152px]" />
        <PageTab label="Customer Insights" width="w-[138px]" />
        <PageTab label="Geo Sales" width="w-[92px]" active />
        <PageTab label="Q&A" width="w-[67px]" />
      </div>
      <div className="flex h-[23px] items-center justify-end bg-[#f3f3f3] pr-[18px] text-[#605e5c]">
        <span className="text-[14px] font-bold leading-none">-</span>
        <div className="relative ml-[4px] h-px w-[100px] bg-[#605e5c]">
          <span className="absolute left-[50px] -top-[2px] h-[5px] w-px bg-[#605e5c]" />
          <span className="absolute left-[55px] -top-[5px] h-[11px] w-[4px] bg-[#605e5c]" />
        </div>
        <span className="ml-[6px] text-[14px] font-bold leading-none">+</span>
        <span className="ml-[12px] text-[12px] text-[#797775]">147%</span>
        <svg width="14" height="10" viewBox="0 0 14 10" fill="none" stroke="#605e5c" className="ml-[14px]">
          <rect x=".5" y=".5" width="13" height="9" rx="1" />
          <path d="M3 4V2.500h2M11 6v1.500H9" />
        </svg>
      </div>
      <div className="h-[20px] bg-[#e8e8e8]" />
    </div>
  );
}

export default function App() {
  return (
    <div className="h-[1213px] w-[2228px] overflow-hidden bg-[#1a1a17] font-['Open_Sans',sans-serif]">
      <div className="ml-px flex h-[1209px] w-[2225px] flex-col overflow-hidden rounded-b-[10px] bg-[#f0f0f0]">
        <TopBar />
        <div className="flex min-h-0 flex-1">
          <LeftRail />
          <div className="flex min-w-0 flex-1 flex-col">
            <CommandBar />
            <div className="flex min-h-0 flex-1">
              <ReportPage />
              <FiltersPane />
            </div>
            <BottomBars />
          </div>
        </div>
      </div>
    </div>
  );
}
